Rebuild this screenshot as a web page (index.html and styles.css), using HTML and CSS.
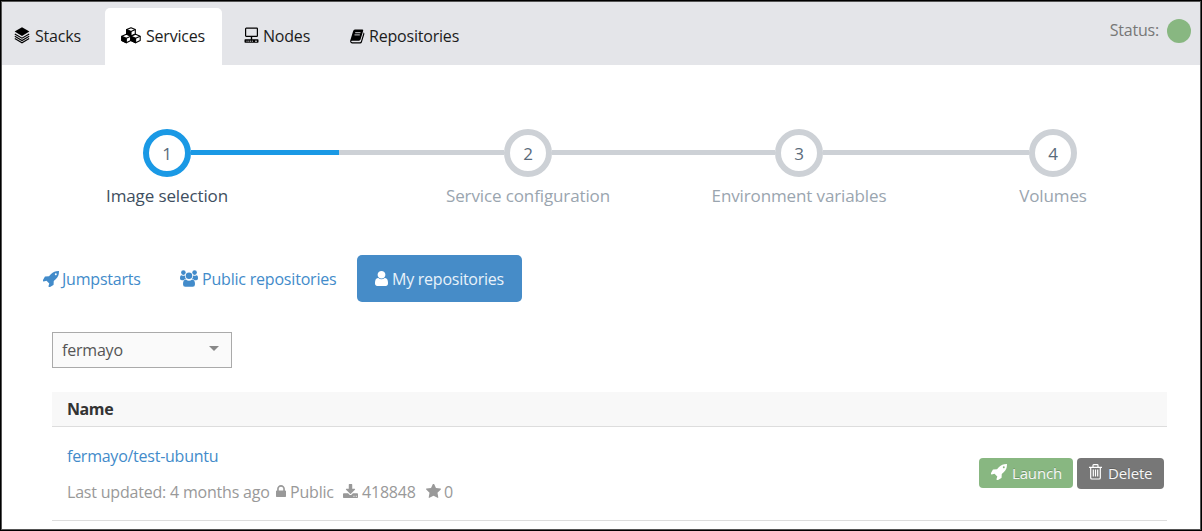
FILE: index.html
```html
<!DOCTYPE html>
<html lang="en">
<head>
<meta charset="utf-8">
<title>Services</title>
<link rel="stylesheet" href="styles.css">
</head>
<body>
<svg class="defs" width="0" height="0">
  <symbol id="rocket" viewBox="64 128 1600 1600"><path d="M1440 448q0-40-28-68t-68-28-68 28-28 68 28 68 68 28 68-28 28-68zm224-288q0 249-75.500 430.500t-253.500 360.500q-81 80-195 176l-20 379q-2 16-16 26l-384 224q-7 4-16 4-12 0-23-9l-64-64q-13-14-8-32l85-276-281-281-276 85q-3 1-9 1-14 0-23-9l-64-64q-17-19-5-39l224-384q10-14 26-16l379-20q96-114 176-195 188-187 358-258t431-71q14 0 24 9.500t10 22.500z"/></symbol>
</svg>
<div class="app">
  <header class="topbar">
    <nav class="tabs">
      <a class="tab tab-stacks"><svg class="icon" width="16" height="17" viewBox="0 0 16 17"><path d="M8 .3 15.400 4.600 8 9 .6 4.600z"/><path d="M.8 7 8 11.200 15.200 7M.8 9.300 8 13.500 15.200 9.300M.8 11.600 8 15.800 15.200 11.600" fill="none" stroke="#000" stroke-width="1.100"/></svg><span>Stacks</span></a>
      <a class="tab tab-services active"><svg class="icon" width="20" height="17" viewBox="0 0 20 17"><g stroke="#000" stroke-width="1.100" stroke-linejoin="round"><path fill="#fff" d="M10 .8 14.300 2.600v4.300L10 8.900 5.700 6.900V2.600z"/><path d="M5.700 2.600 10 4.500v4.400L5.700 6.900z"/><path fill="none" d="M10 4.500l4.300-1.900"/><path fill="#fff" d="M5.300 7.300 9.800 9.200v4.400l-4.500 2.200-4.500-2.200V9.200z"/><path d="M.8 9.200l4.500 2v4.600L.8 13.600z"/><path fill="none" d="M5.300 11.200l4.500-2"/><path fill="#fff" d="M14.600 7.300l4.600 1.900v4.400l-4.600 2.200-4.600-2.200V9.200z"/><path d="M10 9.200l4.600 2v4.600L10 13.600z"/><path fill="none" d="M14.600 11.200l4.600-2"/></g></svg><span>Services</span></a>
      <a class="tab tab-nodes"><svg class="icon" width="15" height="17" viewBox="0 0 15 17"><rect x="1.600" y="1.100" width="11.800" height="8.300" rx=".7" fill="none" stroke="#000" stroke-width="1.200"/><path d="M6.800 9.500h1.400v3H6.800zM1.200 12.200h12.600q.7 0 .7.700v2.200q0 .7-.7.700H1.200q-.7 0-.7-.7v-2.200q0-.7.700-.7z"/><path d="M2.500 14.200h6.700" stroke="#e4e5e9" stroke-dasharray="1 .8"/><path d="M11 14.200h2" stroke="#e4e5e9"/></svg><span>Nodes</span></a>
      <a class="tab tab-repos"><svg class="icon" width="15" height="15" viewBox="0 0 15 15"><path d="M4.900.6h7.300q1.300 0 1 1.200l-2.700 8.800q-.4 1.100-1.500 1.100H1.900q-.9 0-.7.700.2.800 1.300.8h7.300q.9 0 1.200-1l2.600-8.600q1 .4.700 1.600l-2.400 8q-.5 1.300-1.800 1.300H2.200Q.5 14.500.2 12.700q-.2-.8.200-1.700L3 2.400Q3.500.6 4.900.6z"/><path d="M5.200 3.700h5.300M4.500 5.900h5.300" stroke="#e4e5e9" stroke-width=".9"/></svg><span>Repositories</span></a>
    </nav>
    <div class="status"><span>Status:</span><i class="status-dot"></i></div>
  </header>

  <ol class="wizard">
    <li class="step current"><b>1</b><span>Image selection</span></li>
    <li class="line line-a"></li>
    <li class="step"><b>2</b><span>Service configuration</span></li>
    <li class="line line-b"></li>
    <li class="step"><b>3</b><span>Environment variables</span></li>
    <li class="line line-c"></li>
    <li class="step"><b>4</b><span>Volumes</span></li>
  </ol>

  <nav class="pills">
    <a class="pill pill-jump"><svg class="icon" width="16" height="16"><use href="#rocket"/></svg><span>Jumpstarts</span></a>
    <a class="pill pill-public"><svg class="icon" width="18" height="17" viewBox="0 0 18 17"><circle cx="3.400" cy="2.600" r="2.300"/><circle cx="14.600" cy="2.600" r="2.300"/><path d="M1.500 5.300q1.900 1 3.600.2-.2 2.300 1 3.500-1.500.1-2.500 1.200H1.800Q0 10.200 0 8.500 0 5.300 1.500 5.300zM16.500 5.300q-1.900 1-3.600.2.200 2.300-1 3.500 1.500.1 2.500 1.200h1.800q1.800 0 1.800-1.700 0-3.200-1.500-3.200z"/><circle cx="9" cy="5.800" r="3.200"/><path d="M5.800 9.500q3.200 2.400 6.400 0 2.800.3 2.800 4.800 0 2.500-2.300 2.500H5.300Q3 16.800 3 14.300q0-4.500 2.800-4.800z"/></svg><span>Public repositories</span></a>
    <a class="pill pill-mine"><svg class="icon" width="13" height="15" viewBox="256 128 1280 1536" preserveAspectRatio="none"><path d="M1536 1399q0 109-62.500 187t-150.500 78h-854q-88 0-150.500-78t-62.500-187q0-85 8.500-160.500t31.500-152 58.500-131 94-89 134.500-34.500q131 128 313 128t313-128q76 0 134.500 34.500t94 89 58.500 131 31.500 152 8.500 160.500zm-256-887q0 159-112.500 271.500t-271.500 112.500-271.500-112.500-112.500-271.500 112.500-271.500 271.500-112.500 271.500 112.500 112.500 271.500z"/></svg><span>My repositories</span></a>
  </nav>

  <main class="content">
    <div class="select"><span>fermayo</span><svg class="icon" width="10" height="5" viewBox="0 0 10 5"><path d="M0 0h10L5 5z"/></svg></div>
    <div class="list-head">Name</div>
    <div class="list-row">
      <div class="info">
        <a class="repo">fermayo/test-ubuntu</a>
        <div class="meta">
          <span class="updated">Last updated: 4 months ago</span>
          <svg class="icon lock" width="10" height="12" viewBox="320 128 1152 1408" preserveAspectRatio="none"><path d="M640 768h512v-192q0-106-75-181t-181-75-181 75-75 181v192zm832 96v576q0 40-28 68t-68 28h-960q-40 0-68-28t-28-68v-576q0-40 28-68t68-28h32v-192q0-184 132-316t316-132 316 132 132 316v192h32q40 0 68 28t28 68z"/></svg>
          <span class="visibility">Public</span>
          <svg class="icon" width="15" height="14" viewBox="64 0 1664 1536" preserveAspectRatio="none"><path d="M1344 1344q0-26-19-45t-45-19-45 19-19 45 19 45 45 19 45-19 19-45zm256 0q0-26-19-45t-45-19-45 19-19 45 19 45 45 19 45-19 19-45zm128-224v320q0 40-28 68t-68 28h-1472q-40 0-68-28t-28-68v-320q0-40 28-68t68-28h465l135 136q58 56 136 56t136-56l136-136h464q40 0 68 28t28 68zm-325-569q17 41-14 70l-448 448q-18 19-45 19t-45-19l-448-448q-31-29-14-70 17-39 59-39h256v-448q0-26 19-45t45-19h256q26 0 45 19t19 45v448h256q42 0 59 39z"/></svg>
          <span class="pulls">418848</span>
          <svg class="icon" width="15" height="14" viewBox="64 109 1664 1512" preserveAspectRatio="none"><path d="M1728 647q0 22-26 48l-363 354 86 500q1 7 1 20 0 21-10.500 35.500t-30.500 14.500q-19 0-40-12l-449-236-449 236q-22 12-40 12-21 0-31.500-14.500t-10.500-35.500q0-6 2-20l86-500-364-354q-25-27-25-48 0-37 56-46l502-73 225-455q19-41 49-41t49 41l225 455 502 73q56 9 56 46z"/></svg>
          <span class="stars">0</span>
        </div>
      </div>
      <div class="actions">
        <button class="btn launch"><svg class="icon" width="16" height="16"><use href="#rocket"/></svg><span>Launch</span></button>
        <button class="btn delete"><svg class="icon" width="13" height="16" viewBox="0 0 13 16"><path fill="none" stroke="#fff" stroke-width="1.200" d="M0 3.300h13M4 3V1.400q0-.7.700-.7h3.600q.7 0 .7.700V3M1.700 3.300v10.400q0 1.300 1.200 1.300h7.200q1.200 0 1.200-1.300V3.300M4.300 5.500v7M6.500 5.500v7M8.700 5.500v7"/></svg><span>Delete</span></button>
      </div>
    </div>
  </main>
</div>
</body>
</html>
```
FILE: styles.css
```css
* { box-sizing: border-box; }
body { margin: 0; background: #fff; font-family: "Open Sans", sans-serif; font-size: 16px; line-height: 22px; letter-spacing: -.2px; }
.defs { display: block; }
.app { height: 531px; overflow: hidden; border: 1px solid #000; outline: 1px solid #555; outline-offset: -2px; }
.icon { display: block; flex: none; fill: currentColor; }

.topbar { display: flex; justify-content: space-between; height: 64px; background: #e4e5e9; }
.tabs { display: flex; align-items: flex-end; }
.tab { display: flex; height: 57px; padding-top: 17px; color: #1c1c1c; white-space: nowrap; }
.tab .icon { color: #000; margin-top: 2px; }
.tab-stacks { width: 104px; padding-left: 13px; gap: 5px; }
.tab-services { width: 117px; padding-left: 16px; gap: 5px; }
.tab-nodes { width: 106px; padding-left: 22px; gap: 4px; }
.tab-repos { padding-left: 22px; gap: 4px; }
.tab-repos .icon { margin-top: 4px; }
.active { background: #fff; border-radius: 5px 5px 0 0; }
.status { display: flex; gap: 8px; padding: 18px 10px 0 0; color: #777; }
.status-dot { width: 24px; height: 24px; border-radius: 50%; background: #88b781; }

.wizard { display: flex; list-style: none; margin: 64px 0 0; padding: 0 0 0 142px; height: 79px; letter-spacing: -.12px; }
.step { display: flex; flex-direction: column; align-items: center; width: 48px; flex: none; color: #9aa5af; font-size: 17px; white-space: nowrap; }
.step b { width: 48px; height: 48px; border: 6px solid #cdd1d6; border-radius: 50%; text-align: center; line-height: 38px; font-weight: 400; color: #5a6b7b; }
.step span { margin-top: 8px; }
.current { color: #3e4e60; }
.current b { border-color: #1a99e5; }
.line { height: 5px; margin-top: 21px; background: #cdd1d6; }
.line-a { width: 313px; background: linear-gradient(90deg, #1a99e5 148px, #cdd1d6 148px); }
.line-b { width: 223px; }
.line-c { width: 206px; }

.pills { display: flex; margin-top: 47px; padding-left: 42px; height: 47px; color: #428bca; }
.pill { display: flex; gap: 3px; padding-top: 13px; white-space: nowrap; }
.pill .icon { margin-top: 3px; }
.pill-jump { width: 137px; }
.pill-public { width: 177px; gap: 4px; }
.pill-public .icon { margin-top: 2px; }
.pill-mine { width: 165px; padding-left: 18px; gap: 4px; border-radius: 5px; background: #468cc8; color: #e8f2fa; letter-spacing: -.25px; }
.pill-mine .icon { color: #fff; }

.content { padding: 30px 34px 0 51px; }
.select { display: flex; justify-content: space-between; width: 180px; height: 36px; padding: 6px 12px 0 9px; border: 1px solid #aaa; background: #fafafa; color: #555; }
.select .icon { margin-top: 7px; color: #888; }
.list-head { margin-top: 24px; height: 35px; padding: 6px 15px; border-bottom: 1px solid #ddd; background: #f8f8f8; color: #333; font-weight: 700; letter-spacing: -.4px; }
.list-row { display: flex; justify-content: space-between; height: 94px; padding: 18px 3px 0 15px; border-bottom: 1px solid #ddd; }
.info { display: flex; flex-direction: column; gap: 14px; }
.repo { color: #428bca; letter-spacing: -.25px; }
.meta { display: flex; color: #999; gap: 4px; white-space: nowrap; }
.meta .icon { margin-top: 3px; }
.meta .lock { margin-top: 4px; }
.updated { width: 205px; }
.visibility { width: 49px; }
.pulls { width: 60px; }
.stars { margin-left: -1px; }
.actions { display: flex; align-items: flex-start; gap: 4px; padding-top: 13px; }
.btn { display: flex; height: 30px; padding: 4px 0 0 12px; gap: 5px; border: 0; border-radius: 4px; color: #f6f6f6; font: 15px/22px "Open Sans", sans-serif; letter-spacing: -.15px; text-shadow: 0 -1px 0 rgba(0,0,0,.2); }
.btn .icon { margin-top: 2px; color: #fff; }
.launch { width: 94px; background: #88b781; }
.delete { width: 87px; height: 31px; gap: 6px; background: #777; }
```
